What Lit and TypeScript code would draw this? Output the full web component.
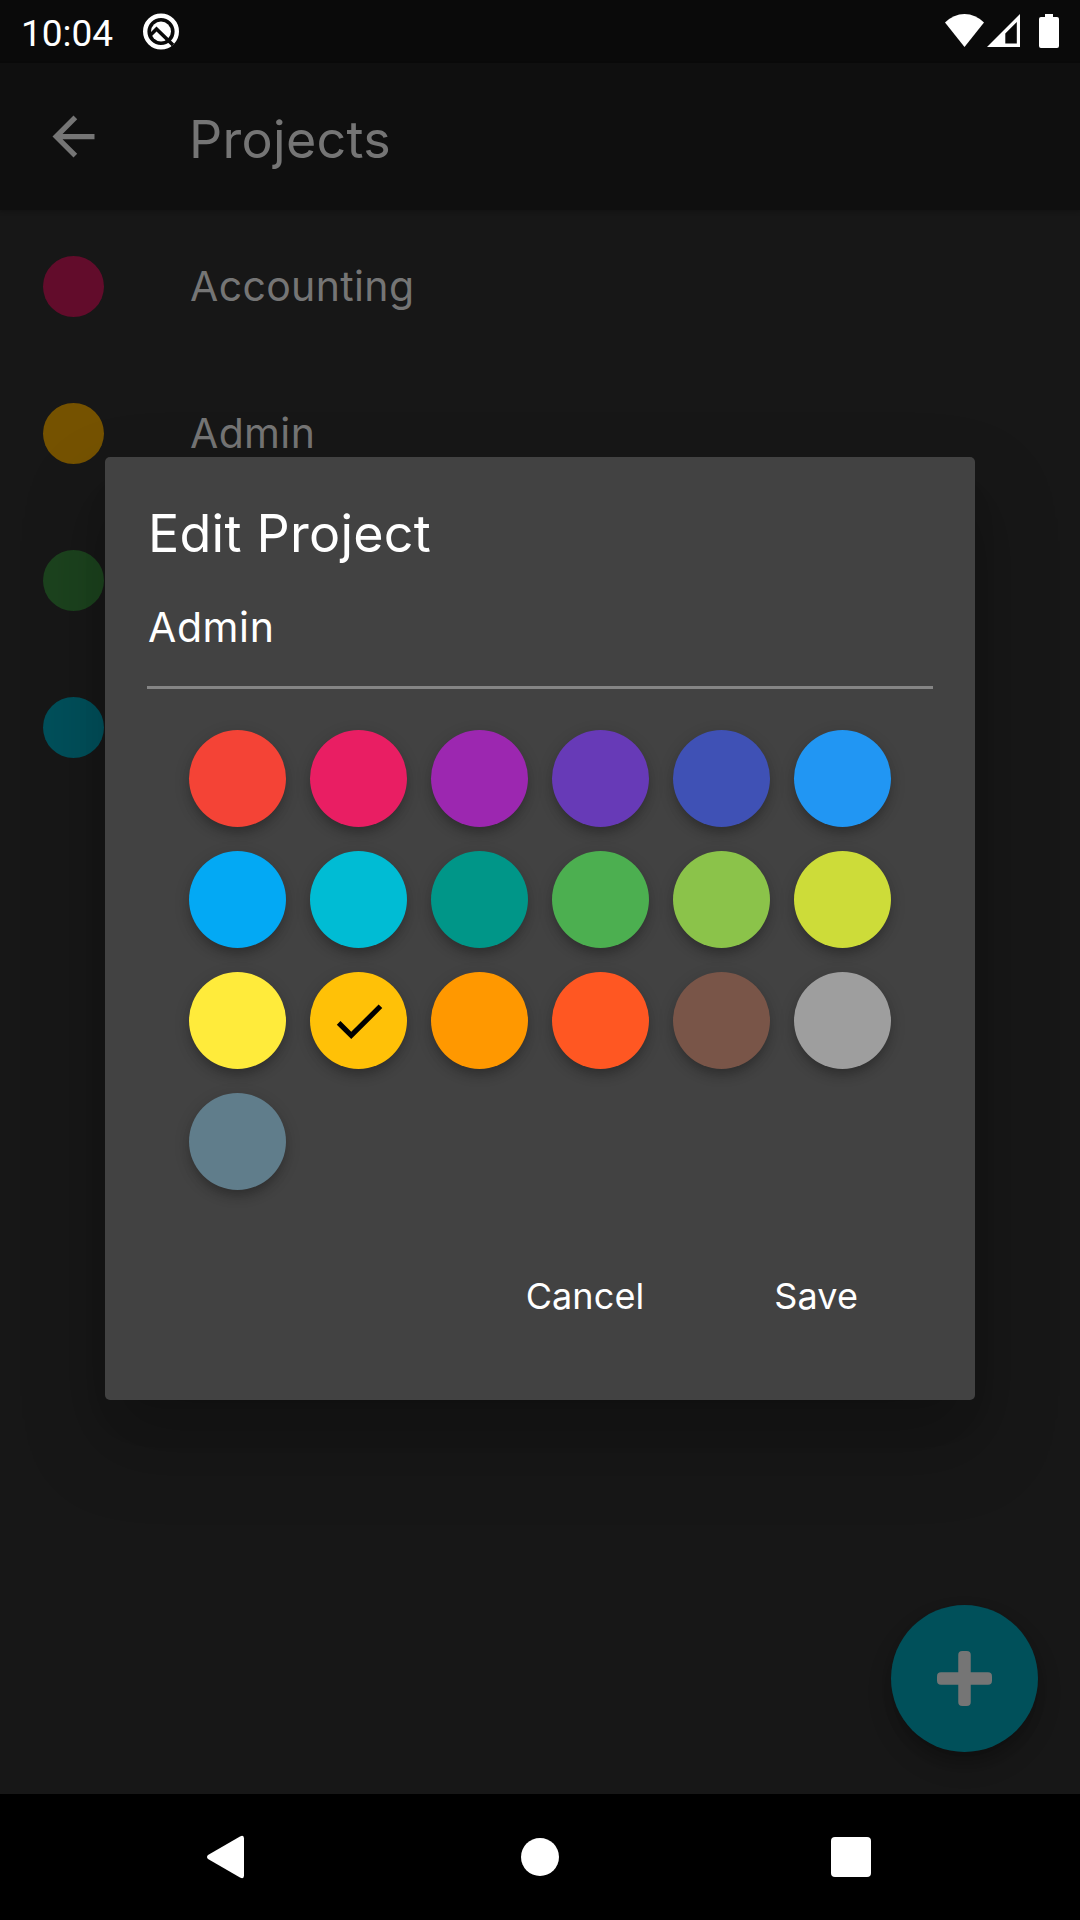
import { LitElement, html, css, svg } from "lit";
import { customElement } from "lit/decorators.js";
import { styleMap } from "lit/directives/style-map.js";

const PROJECTS = [
  { name: "Accounting", color: "#620c2b" },
  { name: "Admin", color: "#755200" },
  { name: "", color: "#1c431e" },
  { name: "", color: "#00505b" },
];

const SWATCHES = [
  "#f44336", "#e91e63", "#9c27b0", "#673ab7", "#3f51b5", "#2196f3",
  "#03a9f4", "#00bcd4", "#009688", "#4caf50", "#8bc34a", "#cddc39",
  "#ffeb3b", "#ffc107", "#ff9800", "#ff5722", "#795548", "#9e9e9e",
  "#607d8b",
];
const SELECTED = "#ffc107";

@customElement("status-bar")
class StatusBar extends LitElement {
  static styles = css`
    :host { display: flex; align-items: center; height: 63px; background: #0a0a0a; color: #fff; box-sizing: border-box; padding: 0 20px 0 21px; }
    .clock { font: 400 37px/63px Roboto, sans-serif; width: 119px; padding-top: 4px; }
    .spacer { flex: 1; }
    svg { display: block; }
  `;
  render() {
    return html`
      <div class="clock">10:04</div>
      <svg width="42" height="63" viewBox="140 0 42 63">
        <circle cx="161" cy="31.5" r="15.8" fill="none" stroke="#fff" stroke-width="4.4" />
        <circle cx="161" cy="31.5" r="10" fill="#fff" />
        <path d="M150 35.5 L156.5 29 L173 45" fill="none" stroke="#0a0a0a" stroke-width="3.6" />
      </svg>
      <div class="spacer"></div>
      <svg width="120" height="63" viewBox="940 0 120 63" fill="#fff">
        <path d="M945 22.6 Q953.5 14 964.5 14 T984 22.6 L964.5 47z" />
        <path fill-rule="evenodd" d="M987 47 L1020 14 V47z M1005.3 43.5 H1016.8 V22 L1005.3 33.5z" />
        <path d="M1045 14h8v3h4q2 0 2 2v27q0 2-2 2h-16q-2 0-2-2v-27q0-2 2-2h4z" />
      </svg>
    `;
  }
}

@customElement("app-header")
class AppHeader extends LitElement {
  static styles = css`
    :host { display: flex; align-items: center; height: 147px; background: #0f0f0f; box-sizing: border-box; padding-left: 42px; box-shadow: 0 2px 4px rgba(0, 0, 0, 0.2); }
    .title { margin-left: 84px; padding-top: 6px; font: 400 52px/60px Inter, sans-serif; letter-spacing: 0.3px; color: #757575; }
  `;
  render() {
    return html`
      <svg width="63" height="63" viewBox="0 0 24 24" fill="#757575">
        <path d="M20 11H7.83l5.59-5.59L12 4l-8 8 8 8 1.41-1.41L7.83 13H20v-2z" />
      </svg>
      <div class="title">Projects</div>
    `;
  }
}

@customElement("project-list")
class ProjectList extends LitElement {
  static styles = css`
    :host { display: block; padding-top: 3px; }
    .row { display: flex; align-items: center; height: 147px; padding-left: 43px; }
    .dot { width: 61px; height: 61px; border-radius: 50%; }
    .name { margin-left: 86px; padding-bottom: 2px; font: 400 41px/50px Inter, sans-serif; letter-spacing: 0.35px; color: #757575; }
  `;
  render() {
    return PROJECTS.map(
      (p) => html`<div class="row">
        <div class="dot" style=${styleMap({ background: p.color })}></div>
        <div class="name">${p.name}</div>
      </div>`
    );
  }
}

@customElement("edit-dialog")
class EditDialog extends LitElement {
  static styles = css`
    :host { display: block; box-sizing: border-box; width: 870px; height: 943px; padding: 42px; border-radius: 5px; background: #424242; color: #fff; font-family: Inter, sans-serif; box-shadow: 0 29px 40px -18px rgba(0, 0, 0, 0.1), 0 40px 80px 8px rgba(0, 0, 0, 0.2); }
    .title { font-size: 52px; line-height: 70px; letter-spacing: 0.25px; padding-left: 1px; }
    .field { font-size: 41px; line-height: 50px; letter-spacing: 0.6px; height: 120px; box-sizing: border-box; padding: 33px 0 0 1px; border-bottom: 3px solid #858585; }
    .swatches { display: grid; grid-template-columns: repeat(6, 97px); gap: 24px; padding: 41px 0 0 42px; }
    .swatch { display: flex; align-items: center; justify-content: center; width: 97px; height: 97px; border-radius: 50%; box-shadow: 0 8px 11px -3px rgba(0, 0, 0, 0.2), 0 4px 16px rgba(0, 0, 0, 0.16); }
    .actions { display: flex; justify-content: flex-end; gap: 130px; padding: 84px 75px 0 0; font-size: 36px; line-height: 44px; letter-spacing: 0.1px; }
  `;
  render() {
    return html`
      <div class="title">Edit Project</div>
      <div class="field">Admin</div>
      <div class="swatches">
        ${SWATCHES.map(
          (c) => html`<div class="swatch" style=${styleMap({ background: c })}>
            ${c === SELECTED
              ? html`<svg width="62" height="62" viewBox="0 0 24 24">
                  ${svg`<path d="M9 16.17L4.83 12l-1.42 1.41L9 19 21 7l-1.41-1.41z" />`}
                </svg>`
              : null}
          </div>`
        )}
      </div>
      <div class="actions"><span>Cancel</span><span>Save</span></div>
    `;
  }
}

@customElement("nav-bar")
class NavBar extends LitElement {
  static styles = css`
    :host { display: block; height: 126px; background: #000; }
    svg { display: block; }
  `;
  render() {
    return html`<svg width="1080" height="126" viewBox="0 1794 1080 126" fill="#fff">
      <path d="M240 1836.5 Q244 1834.500 244 1838.500 V1875.500 Q244 1879.500 240 1877.500 L208 1859 Q206 1857 208 1855z" />
      <circle cx="540" cy="1857" r="19" />
      <rect x="831" y="1837" width="40" height="40" rx="4" />
    </svg>`;
  }
}

@customElement("app-root")
class AppRoot extends LitElement {
  static styles = css`
    :host { display: flex; flex-direction: column; position: relative; width: 1080px; height: 1920px; overflow: hidden; background: #171717; }
    .content { flex: 1; position: relative; }
    .fab { position: absolute; right: 42px; bottom: 42px; width: 147px; height: 147px; border-radius: 50%; background: #00505a; display: flex; align-items: center; justify-content: center; box-shadow: 0 8px 13px -3px rgba(0, 0, 0, 0.2), 0 14px 24px rgba(0, 0, 0, 0.18); }
    .dialog { position: absolute; left: 105px; top: 457px; }
  `;
  render() {
    return html`
      <status-bar></status-bar>
      <app-header></app-header>
      <div class="content">
        <project-list></project-list>
        <div class="fab">
          <svg width="55" height="55" viewBox="0 0 55 55" fill="#757575">
            <rect x="21.250" y="0" width="12.500" height="55" rx="4" />
            <rect x="0" y="21.250" width="55" height="12.500" rx="4" />
          </svg>
        </div>
      </div>
      <nav-bar></nav-bar>
      <edit-dialog class="dialog"></edit-dialog>
    `;
  }
}
